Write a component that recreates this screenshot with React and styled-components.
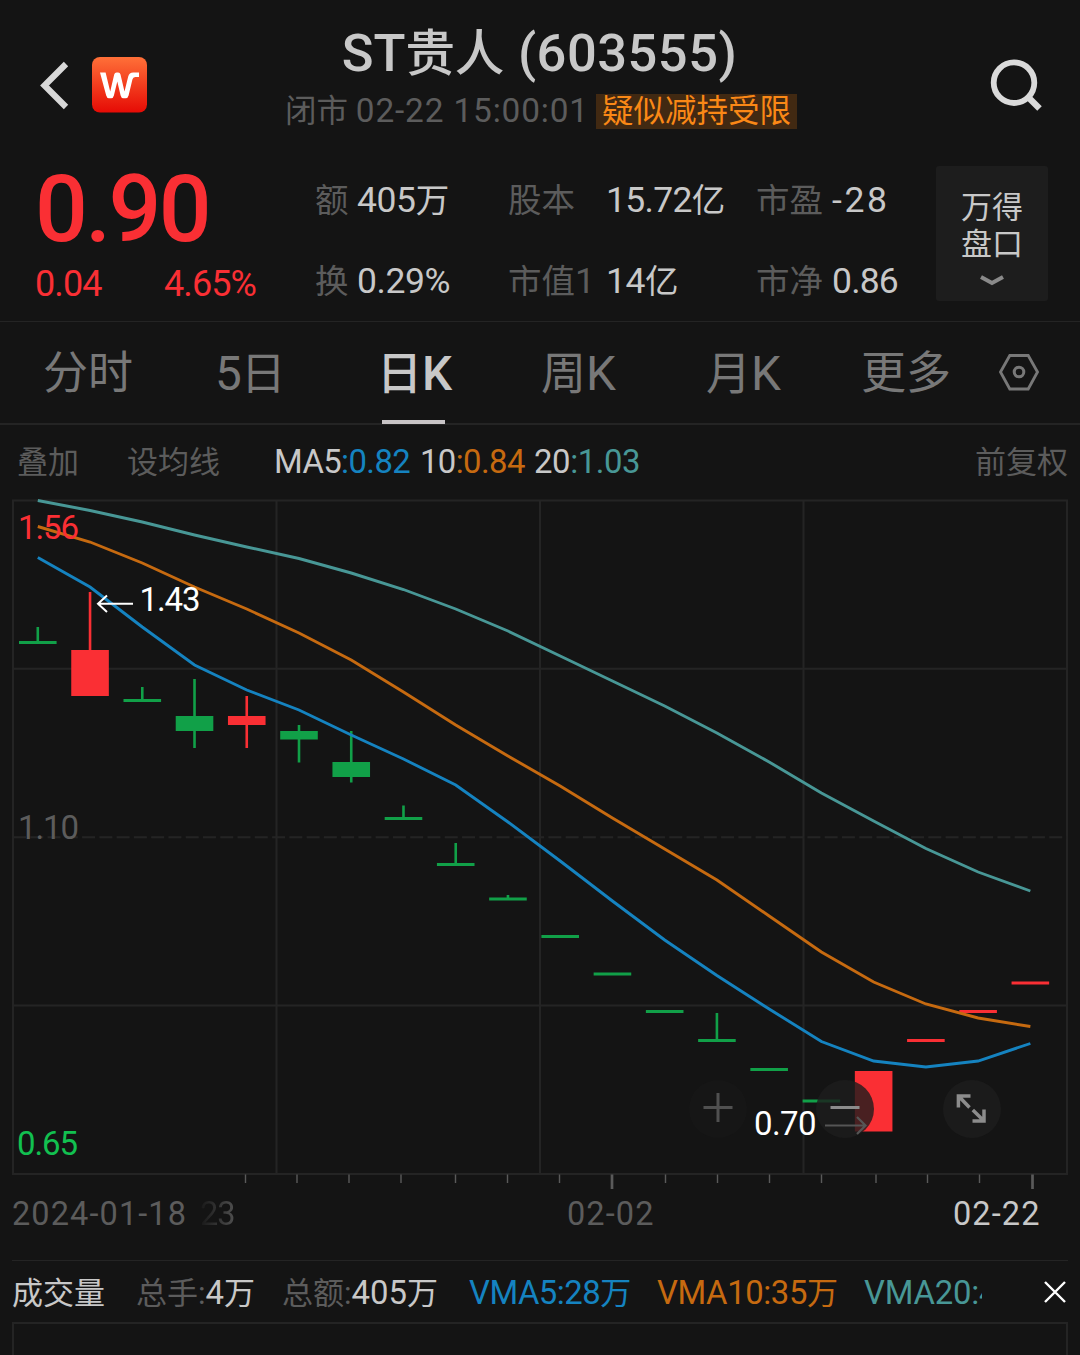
import React from 'react';
import styled, { createGlobalStyle } from 'styled-components';

const colors = {
    bg: '#141414',
    line: '#242424',
    text: '#c8c8c8',
    muted: '#5c5c5c',
    tab: '#787878',
    red: '#fa2f34',
    green: '#11a048',
    blue: '#1583c0',
    orange: '#c66a10',
    teal: '#489796',
}

const GlobalStyle = createGlobalStyle`
    * {
        box-sizing: border-box;
    }

    body {
        margin: 0;
        background: ${colors.bg};
        color: ${colors.text};
        font-family: Roboto, "Noto Sans CJK SC", sans-serif;
        overflow: hidden;
    }
`

const Screen = styled.main`
    width: 1080px;
    height: 1355px;
    overflow: hidden;
    display: flex;
    flex-direction: column;
    background: ${colors.bg};
`

// digits run slightly larger than the chinese text next to them
const Num = styled.span`
    font-size: 1.06em;
    letter-spacing: ${p => p.$ls || 0}px;
`

const Header = styled.header`
    height: 150px;
    flex-shrink: 0;
    padding: 0 38px 0 40px;
    display: grid;
    grid-template-columns: 1fr auto 1fr;
`

const HeaderLeft = styled.div`
    display: flex;
    align-items: center;
    gap: 23px;
    height: 170px;
`

const HeaderRight = styled.div`
    display: flex;
    align-items: center;
    justify-content: flex-end;
    height: 170px;
`

const Titles = styled.div`
    display: flex;
    flex-direction: column;
    align-items: center;
`

const Title = styled.h1`
    margin: 18px 3px 0 0;
    font-size: 49.5px;
    line-height: 70px;
    font-weight: 500;
    white-space: nowrap;
`

const Subtitle = styled.div`
    margin-top: 5px;
    height: 35px;
    display: flex;
    align-items: center;
    gap: 7px;
    font-size: 31.5px;
    line-height: 36px;
    color: ${colors.muted};
    white-space: nowrap;
`

const Chip = styled.span`
    height: 35px;
    padding: 0 6px;
    background: #412912;
    color: #fa8816;
`

const Quote = styled.section`
    height: 172px;
    flex-shrink: 0;
    padding: 16px 32px 0 35px;
    border-bottom: 1px solid ${colors.line};
    display: grid;
    grid-template-columns: 280px 193px 248px 180px 112px;
`

const PriceBox = styled.div`
    color: ${colors.red};
`

const Price = styled.div`
    padding-top: 2px;
    font-size: 93px;
    line-height: 84px;
    height: 84px;
    font-weight: 500;
    letter-spacing: -2.6px;
`

const Change = styled.div`
    margin-top: 13px;
    display: grid;
    grid-template-columns: 129px auto;
    font-size: 36px;
    line-height: 42px;
    letter-spacing: -0.9px;
`

const StatColumn = styled.div`
    display: grid;
    grid-template-rows: 68px 81px;
`

const Stat = styled.div`
    display: grid;
    grid-template-columns: ${p => p.$label}px auto;
    align-items: baseline;
    justify-content: start;
    font-size: 33.5px;
    line-height: 69px;
    white-space: nowrap;

    &:last-child {
        padding-top: 13px;
    }
`

const StatLabel = styled.span`
    color: ${colors.muted};
`

const DepthButton = styled.button`
    height: 135px;
    border: 0;
    border-radius: 3px;
    padding: 23px 0 0;
    background: #1d1d1d;
    color: ${colors.text};
    font: inherit;
    font-size: 31px;
    line-height: 37px;
    display: flex;
    flex-direction: column;
    align-items: center;

    svg {
        margin-top: 11px;
    }
`

const Tabs = styled.nav`
    height: 103px;
    flex-shrink: 0;
    padding-left: 43px;
    border-bottom: 2px solid ${colors.line};
    display: grid;
    grid-template-columns: 172px 164px 162px 165px 155px 138px auto;
    align-items: start;
    font-size: 45px;
    line-height: 104px;
    white-space: nowrap;
`

const Tab = styled.div`
    height: 103px;
    color: ${p => p.$active ? colors.text : colors.tab};
    font-weight: ${p => p.$active ? 500 : 400};
    text-indent: ${p => p.$active ? -2 : 0}px;
    background: ${p => p.$active ? 'linear-gradient(#c8c4c6, #c8c4c6) 3px 98px / 63px 4px no-repeat' : 'none'};
`

const TabIcon = styled.div`
    height: 101px;
    display: flex;
    align-items: center;
`

const MaBar = styled.div`
    height: 73px;
    flex-shrink: 0;
    padding: 0 12px 0 17px;
    display: grid;
    grid-template-columns: 110px 147px 146px 114px 1fr auto;
    align-items: baseline;
    font-size: 31px;
    line-height: 74px;
    white-space: nowrap;
    color: ${colors.muted};
`

const Ma = styled.span`
    color: ${p => p.$color};

    b {
        font-weight: 400;
        color: ${colors.text};
    }
`

const ChartWrap = styled.div`
    height: 694px;
    flex-shrink: 0;
    position: relative;

    svg {
        display: block;
    }
`

const RoundButton = styled.button`
    position: absolute;
    left: ${p => p.$left}px;
    top: 582px;
    width: 58px;
    height: 58px;
    padding: 0;
    border: 0;
    border-radius: 50%;
    background: ${p => p.$faint ? 'rgba(40,40,40,0.12)' : 'rgba(29,29,29,0.8)'};
`

const Axis = styled.div`
    height: 68px;
    flex-shrink: 0;
    padding-left: 12px;
    display: grid;
    grid-template-columns: 188px 367px 386px auto;
    font-size: 32.5px;
    line-height: 44px;
    color: ${colors.muted};
    white-space: nowrap;
`

const AxisLabel = styled.span`
    letter-spacing: ${p => p.$ls || 0}px;
    color: ${p => p.$bright ? colors.text : colors.muted};
`

const FadedLabel = styled.span`
    color: transparent;
    letter-spacing: -1px;
    background: linear-gradient(90deg, #181818, #4e4e4e 34px);
    background-clip: text;
`

const VolumeBar = styled.div`
    margin: 0 12px;
    height: 62px;
    flex-shrink: 0;
    border-top: 1px solid ${colors.line};
    display: grid;
    grid-template-columns: 124px 146px 187px 188px 207px 118px 1fr auto;
    align-items: baseline;
    font-size: 31px;
    line-height: 64px;
    white-space: nowrap;

    svg {
        align-self: center;
    }
`

const VolumeItem = styled.span`
    height: 61px;
    overflow: hidden;
    color: ${p => p.$color || colors.text};

    i {
        font-style: normal;
        color: ${colors.muted};
    }
`

const VolumeChart = styled.div`
    margin: 0 12px;
    flex: 1;
    border: 2px solid ${colors.line};
    border-bottom: 0;
`

const STEP = 52.24;
const candleX = i => 37.8 + i * STEP;

// [up, body top, body bottom, high, low]
const candles = [
    [0, 641, 644, 627, 644],
    [1, 650, 696, 592, 696],
    [0, 699, 702, 687, 702],
    [0, 716, 731, 679, 748],
    [1, 716, 725, 696, 748],
    [0, 731, 739.5, 725, 762.5],
    [0, 762, 777, 731, 782.5],
    [0, 817, 820, 805.5, 820],
    [0, 863, 866, 843, 866],
    [0, 897.5, 900.5, 895, 900],
    [0, 935, 938, 935, 938],
    [0, 972.5, 975.5, 973, 975],
    [0, 1010, 1013, 1010, 1013],
    [0, 1039, 1042, 1013, 1042],
    [0, 1068, 1071, 1068, 1071],
    [0, 1099.5, 1102.5, 1100, 1102],
    [1, 1071, 1131.5, 1071, 1131],
    [1, 1039, 1042, 1039, 1042],
    [1, 1010, 1013, 1010, 1013],
    [1, 981.5, 984.5, 982, 984],
];

const averages = [
    { color: colors.teal, values: [500.5, 510.5, 522, 535, 547, 558.5, 573, 589.5, 609, 631, 656, 681, 706, 733, 762, 793, 821, 848.5, 872, 891] },
    { color: colors.orange, values: [526.5, 542, 563, 587, 609, 633, 660, 692, 725, 756, 786, 818, 849, 880, 916, 952, 982, 1004, 1018, 1026.5] },
    { color: colors.blue, values: [557.5, 587, 627, 665, 690, 710, 735, 759, 785, 822, 861, 901, 940, 975.5, 1009, 1041.5, 1061, 1067, 1061, 1043.5] },
];

const ticks = [245.5, 297, 349, 401, 455.5, 507.5, 559.5, 665.5, 717.5, 769.5, 821.5, 876, 927.5, 979.5];

const KChart = () => <svg width="1080" height="694" viewBox="0 498 1080 694" fontFamily="Roboto, sans-serif" fontSize="33">
    <g fill="none" stroke={colors.line} strokeWidth="2">
        <rect x="13" y="500.5" width="1054" height="673.5" />
        <path d="M276.5 500V1174M540 500V1174M803.5 500V1174M13 668.7H1067M13 1005.5H1067" />
        <path d="M13 837.3H1067" strokeDasharray="13 4.27" />
    </g>
    {candles.map(([up, top, bottom, high, low], i) => <g key={i} fill={up ? colors.red : colors.green}>
        <rect x={candleX(i) - 1.3} y={high} width="2.6" height={low - high} />
        <rect x={candleX(i) - 18.8} y={top} width="37.6" height={bottom - top} />
    </g>)}
    {averages.map(({ color, values }) => <polyline
        key={color}
        points={values.map((y, i) => `${candleX(i)},${y}`).join(' ')}
        fill="none"
        stroke={color}
        strokeWidth="2.9"
    />)}
    <text x="18" y="538.5" textLength="61" fill={colors.red}>1.56</text>
    <text x="18" y="838.5" textLength="61" fill={colors.muted}>1.10</text>
    <text x="17" y="1155" textLength="61" fill="#12c050">0.65</text>
    <path d="M133 603.7H98M107 595.5L98 603.7L107 612" fill="none" stroke="#fff" strokeWidth="2" />
    <text x="139.5" y="611" textLength="61" fill="#fff">1.43</text>
    <text x="754" y="1135" textLength="62.5" fill="#fff">0.70</text>
    <g stroke="#5a5a5a">
        {ticks.map(x => <path key={x} d={`M${x} 1174.5V1183`} strokeWidth="1.4" />)}
        <path d="M612 1174.5V1189M1032.5 1174.5V1189" strokeWidth="2.7" />
    </g>
</svg>

const BackIcon = () => <svg width="29" height="50" viewBox="0 0 29 50">
    <path d="M26 4L4.5 25.5L26 47" fill="none" stroke="#d8d8d8" strokeWidth="6.2" />
</svg>

const WindLogo = () => <svg width="55" height="56" viewBox="0 0 55 56">
    <defs>
        <linearGradient id="logo" x1="0" y1="0" x2="0" y2="1">
            <stop offset="0" stopColor="#ff7038" />
            <stop offset="1" stopColor="#e60b05" />
        </linearGradient>
    </defs>
    <rect width="55" height="55.5" rx="8" fill="url(#logo)" />
    <path d="M8 15.5H13.6L18.2 34.5L22.2 17.5Q22.7 15.5 24.6 15.5H26.2Q28 15.5 28.5 17.5L32.5 34.5L36.2 19.5Q37.2 15.5 41.2 15.5H47V20H43.2Q41 20 40.4 22.5L36.6 38.4Q35.9 41.2 33.6 41.2H31.4Q29.2 41.2 28.6 38.5L25.3 24.5L21.9 38.5Q21.3 41.2 19.2 41.2H17Q14.9 41.2 14.2 38.5Z" fill="#fff" />
</svg>

const SearchIcon = () => <svg width="54" height="54" viewBox="0 0 54 54">
    <circle cx="26" cy="24.7" r="20.3" fill="none" stroke="#dadada" strokeWidth="5.8" />
    <path d="M40.5 39.5L51.5 50.5" stroke="#dadada" strokeWidth="6.4" />
</svg>

const HexIcon = () => <svg width="40" height="38" viewBox="0 0 40 38">
    <path d="M1.5 18L10.8 1.5H29.2L38.5 18L29.2 35H10.8Z" fill="none" stroke={colors.tab} strokeWidth="2.8" />
    <circle cx="20" cy="18" r="4.8" fill="none" stroke={colors.tab} strokeWidth="3" />
</svg>

export default () => <>
    <GlobalStyle />
    <Screen>
        <Header>
            <HeaderLeft><BackIcon /><WindLogo /></HeaderLeft>
            <Titles>
                <Title><Num>ST</Num>贵人<Num $ls={0.5}> (603555)</Num></Title>
                <Subtitle>
                    <span>闭市 <Num $ls={0.85}>02-22 15:00:01</Num></span>
                    <Chip>疑似减持受限</Chip>
                </Subtitle>
            </Titles>
            <HeaderRight><SearchIcon /></HeaderRight>
        </Header>
        <Quote>
            <PriceBox>
                <Price>0.90</Price>
                <Change><span>0.04</span><span>4.65%</span></Change>
            </PriceBox>
            <StatColumn>
                <Stat $label={42}><StatLabel>额</StatLabel><span><Num $ls={-0.4}>405</Num>万</span></Stat>
                <Stat $label={42}><StatLabel>换</StatLabel><Num $ls={-0.4}>0.29%</Num></Stat>
            </StatColumn>
            <StatColumn>
                <Stat $label={98}><StatLabel>股本</StatLabel><span><Num $ls={-0.7}>15.72</Num>亿</span></Stat>
                <Stat $label={98}><StatLabel>市值<Num>1</Num></StatLabel><span><Num $ls={-0.4}>14</Num>亿</span></Stat>
            </StatColumn>
            <StatColumn>
                <Stat $label={76}><StatLabel>市盈</StatLabel><Num $ls={2.6}>-28</Num></Stat>
                <Stat $label={76}><StatLabel>市净</StatLabel><Num $ls={-0.8}>0.86</Num></Stat>
            </StatColumn>
            <DepthButton>
                <span>万得</span>
                <span>盘口</span>
                <svg width="26" height="14" viewBox="0 0 26 14">
                    <path d="M2 3L13 9L24 3" fill="none" stroke="#8a8a8a" strokeWidth="4" />
                </svg>
            </DepthButton>
        </Quote>
        <Tabs>
            <Tab>分时</Tab>
            <Tab><Num $ls={-1}>5</Num>日</Tab>
            <Tab $active>日<Num>K</Num></Tab>
            <Tab>周<Num>K</Num></Tab>
            <Tab>月<Num>K</Num></Tab>
            <Tab>更多</Tab>
            <TabIcon><HexIcon /></TabIcon>
        </Tabs>
        <MaBar>
            <span>叠加</span>
            <span>设均线</span>
            <Ma $color={colors.blue}><Num $ls={-0.6}><b>MA5</b>:0.82</Num></Ma>
            <Ma $color={colors.orange}><Num $ls={-0.6}><b>10</b>:0.84</Num></Ma>
            <Ma $color={colors.teal}><Num $ls={-0.4}><b>20</b>:1.03</Num></Ma>
            <span>前复权</span>
        </MaBar>
        <ChartWrap>
            <KChart />
            <RoundButton $left={689} $faint>
                <svg width="58" height="58" viewBox="0 0 58 58">
                    <path d="M14.5 27.5H43.5M29 13V42" stroke="#505050" strokeWidth="3" />
                </svg>
            </RoundButton>
            <RoundButton $left={816}>
                <svg width="58" height="58" viewBox="0 0 58 58">
                    <path d="M14.5 27.5H43.5" stroke="#8c8c8c" strokeWidth="3" />
                    <path d="M9 45.5H49.5M41 37L49.5 45.5L41 54" fill="none" stroke="#555" strokeWidth="2.2" />
                </svg>
            </RoundButton>
            <RoundButton $left={943}>
                <svg width="58" height="58" viewBox="0 0 58 58">
                    <path d="M15.4 27.5V16H27.5M16 16.5L26.5 27.5M41 29.5V41H29.5M40.5 40.5L29.8 30" fill="none" stroke="#8c8c8c" strokeWidth="3.5" />
                </svg>
            </RoundButton>
        </ChartWrap>
        <Axis>
            <AxisLabel $ls={1.1}>2024-01-18</AxisLabel>
            <span><FadedLabel>23</FadedLabel></span>
            <AxisLabel $ls={1.1}>02-02</AxisLabel>
            <AxisLabel $ls={1.1} $bright>02-22</AxisLabel>
        </Axis>
        <VolumeBar>
            <VolumeItem>成交量</VolumeItem>
            <VolumeItem><i>总手:</i><Num>4</Num>万</VolumeItem>
            <VolumeItem><i>总额:</i><Num>405</Num>万</VolumeItem>
            <VolumeItem $color={colors.blue}><Num $ls={-0.5}>VMA5:28</Num>万</VolumeItem>
            <VolumeItem $color={colors.orange}><Num $ls={-0.4}>VMA10:35</Num>万</VolumeItem>
            <VolumeItem $color={colors.teal}><Num $ls={-0.2}>VMA20:4</Num></VolumeItem>
            <span />
            <svg width="24" height="24" viewBox="0 0 24 24">
                <path d="M1 2L21 22M21 2L1 22" stroke="#fff" strokeWidth="2.4" />
            </svg>
        </VolumeBar>
        <VolumeChart />
    </Screen>
</>
